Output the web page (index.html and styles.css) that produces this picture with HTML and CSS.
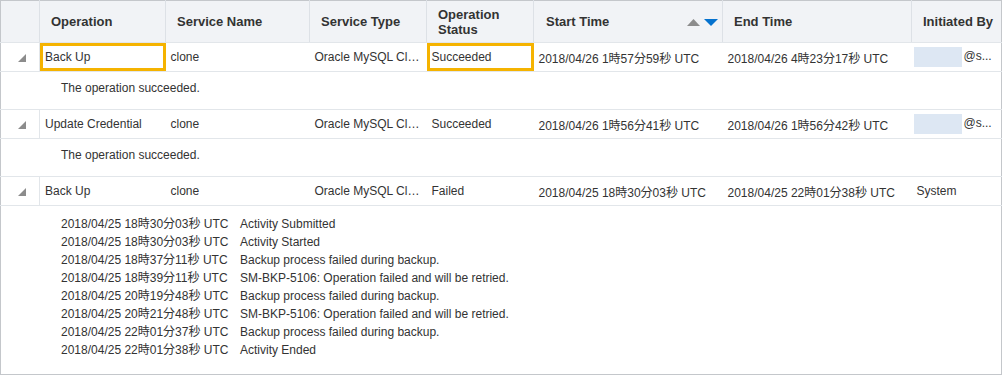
FILE: index.html
```html
<!DOCTYPE html>
<html lang="en">
<head>
    <meta charset="UTF-8">
    <title>Activity</title>
    <link rel="stylesheet" href="styles.css">
</head>
<body>
    <table class="activity-table">
        <colgroup>
            <col class="col-expand">
            <col class="col-op">
            <col class="col-name">
            <col class="col-type">
            <col class="col-status">
            <col class="col-time">
            <col class="col-time">
            <col class="col-by">
        </colgroup>
        <thead>
            <tr>
                <th></th>
                <th>Operation</th>
                <th>Service Name</th>
                <th>Service Type</th>
                <th>Operation<br>Status</th>
                <th>
                    <div class="sort-head">
                        <span>Start Time</span>
                        <span class="sort-icons">
                            <svg width="13" height="7" viewBox="0 0 13 7"><polygon points="6.5,0 13,7 0,7" fill="#8c8c8c"/></svg>
                            <svg width="14" height="7" viewBox="0 0 14 7"><polygon points="0,0 14,0 7,7" fill="#0572ce"/></svg>
                        </span>
                    </div>
                </th>
                <th>End Time</th>
                <th>Initiated By</th>
            </tr>
        </thead>
        <tbody>
            <tr class="row">
                <td class="expander"><svg width="8" height="8" viewBox="0 0 8 8"><polygon points="8,0 8,8 0,8" fill="#8c8c8c"/></svg></td>
                <td class="focus">Back Up</td>
                <td>clone</td>
                <td>Oracle MySQL Cloud Service</td>
                <td class="focus">Succeeded</td>
                <td>2018/04/26 1時57分59秒 UTC</td>
                <td>2018/04/26 4時23分17秒 UTC</td>
                <td class="user"><span class="masked"></span>@s...</td>
            </tr>
            <tr class="detail">
                <td colspan="8">The operation succeeded.</td>
            </tr>
            <tr class="row">
                <td class="expander"><svg width="8" height="8" viewBox="0 0 8 8"><polygon points="8,0 8,8 0,8" fill="#8c8c8c"/></svg></td>
                <td>Update Credential</td>
                <td>clone</td>
                <td>Oracle MySQL Cloud Service</td>
                <td>Succeeded</td>
                <td>2018/04/26 1時56分41秒 UTC</td>
                <td>2018/04/26 1時56分42秒 UTC</td>
                <td class="user"><span class="masked"></span>@s...</td>
            </tr>
            <tr class="detail">
                <td colspan="8">The operation succeeded.</td>
            </tr>
            <tr class="row">
                <td class="expander"><svg width="8" height="8" viewBox="0 0 8 8"><polygon points="8,0 8,8 0,8" fill="#8c8c8c"/></svg></td>
                <td>Back Up</td>
                <td>clone</td>
                <td>Oracle MySQL Cloud Service</td>
                <td>Failed</td>
                <td>2018/04/25 18時30分03秒 UTC</td>
                <td>2018/04/25 22時01分38秒 UTC</td>
                <td class="system">System</td>
            </tr>
            <tr class="detail last">
                <td colspan="8">
                    <div class="log">
                        <span>2018/04/25 18時30分03秒 UTC</span><span>Activity Submitted</span>
                        <span>2018/04/25 18時30分03秒 UTC</span><span>Activity Started</span>
                        <span>2018/04/25 18時37分11秒 UTC</span><span>Backup process failed during backup.</span>
                        <span>2018/04/25 18時39分11秒 UTC</span><span>SM-BKP-5106: Operation failed and will be retried.</span>
                        <span>2018/04/25 20時19分48秒 UTC</span><span>Backup process failed during backup.</span>
                        <span>2018/04/25 20時21分48秒 UTC</span><span>SM-BKP-5106: Operation failed and will be retried.</span>
                        <span>2018/04/25 22時01分37秒 UTC</span><span>Backup process failed during backup.</span>
                        <span>2018/04/25 22時01分38秒 UTC</span><span>Activity Ended</span>
                    </div>
                </td>
            </tr>
        </tbody>
    </table>
</body>
</html>
```

FILE: styles.css
```css
:root {
    --text-color: #333333;
    --header-bg: #f1f3f6;
    --grid-line: #e2e6ea;
    --outer-line: #c4c7cb;
    --focus-color: #f5b300;
}

html, body {
    margin: 0;
    padding: 0;
    background: white;
}

body {
    font-family: "Liberation Sans", Arial, "Noto Sans CJK JP", sans-serif;
    font-size: 12px;
    color: var(--text-color);
}

.activity-table {
    width: 1002px;
    table-layout: fixed;
    border-collapse: collapse;
    border: 1px solid var(--outer-line);
}

.col-expand { width: 39px; }
.col-op { width: 126px; }
.col-name { width: 144px; }
.col-type { width: 117px; }
.col-status { width: 107px; }
.col-time { width: 189px; }
.col-by { width: 90px; }

th {
    height: 41px;
    padding: 0 4px 0 11px;
    background: var(--header-bg);
    border-left: 1px solid #dde1e6;
    border-bottom: 1px solid var(--grid-line);
    text-align: left;
    font-size: 13px;
    font-weight: bold;
    line-height: 15px;
    white-space: nowrap;
    overflow: hidden;
}

th:first-child {
    border-left: none;
}

.sort-head {
    display: flex;
    align-items: center;
    justify-content: space-between;
    padding-left: 1px;
}

.sort-icons {
    display: flex;
    gap: 4px;
    padding-top: 2px;
}

.sort-icons svg {
    display: block;
}

.row td {
    height: 28px;
    padding: 0 4px 0 5px;
    border-bottom: 1px solid var(--grid-line);
    white-space: nowrap;
    overflow: hidden;
    text-overflow: ellipsis;
}

.row td.expander {
    padding: 0 0 0 17px;
    border-right: 1px solid var(--grid-line);
}

.expander svg {
    display: block;
    margin-top: 2px;
}

.row td.focus {
    box-shadow: inset 0 0 0 3px var(--focus-color);
}

.row td.user {
    padding-left: 2px;
}

.masked {
    display: inline-block;
    width: 48px;
    height: 20px;
    margin-right: 2px;
    vertical-align: middle;
    background: #dde7f3;
}

.detail td {
    height: 38px;
    padding: 7px 0 0 60px;
    border-bottom: 1px solid var(--grid-line);
    vertical-align: top;
    line-height: 18px;
    box-sizing: border-box;
}

.detail.last td {
    height: 169px;
    padding-top: 9px;
    border-bottom: none;
}

.log {
    display: grid;
    grid-template-columns: 179px 1fr;
    line-height: 18px;
}
```
